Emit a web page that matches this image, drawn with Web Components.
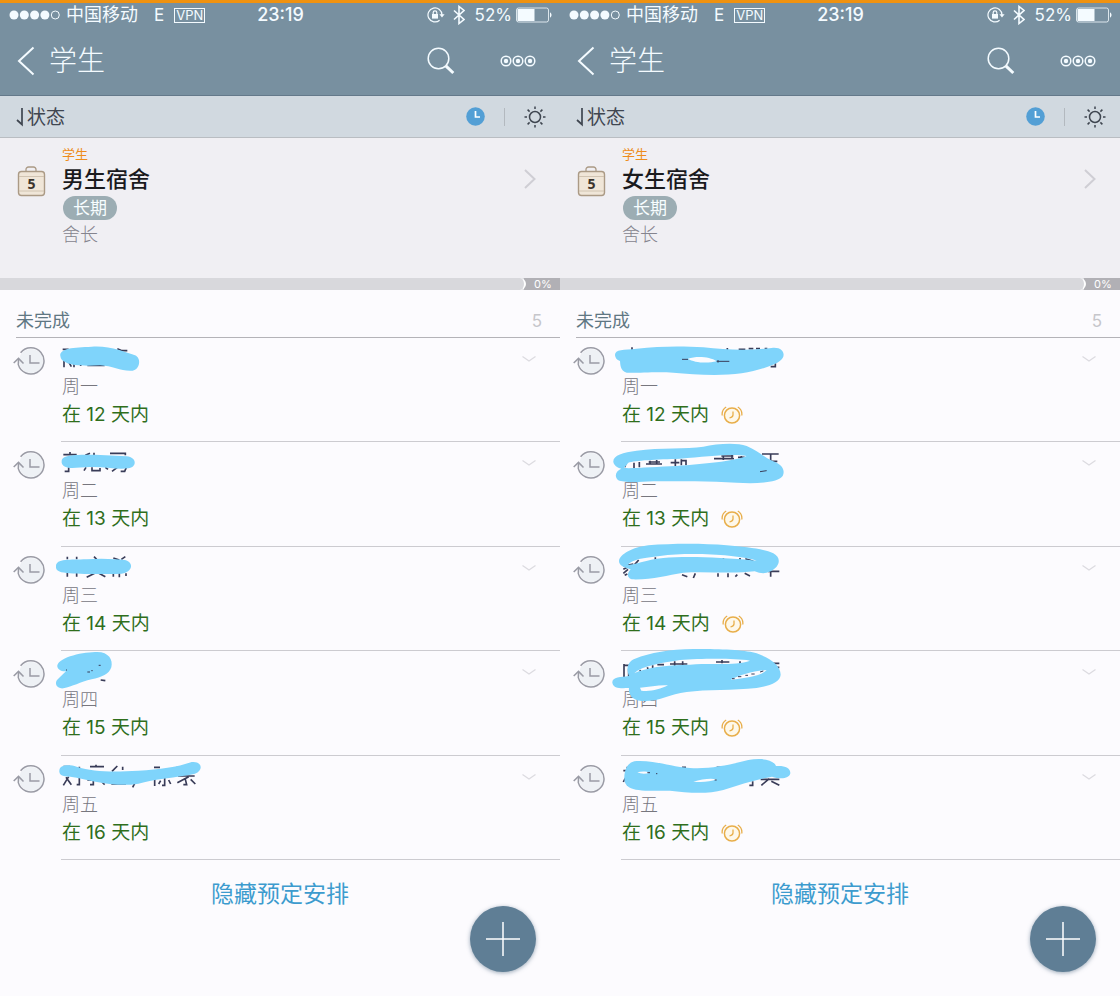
<!DOCTYPE html>
<html lang="zh-CN">
<head>
<meta charset="utf-8">
<meta name="viewport" content="width=device-width, initial-scale=1">
<title>学生</title>
<style>
  body {
    margin: 0;
    background: #fcfbfe;
    font-family: Inter, "Noto Sans CJK SC", sans-serif;
  }
</style>
</head>
<body>
<app-board>
  <phone-screen>
    <status-bar></status-bar>
    <nav-bar>学生</nav-bar>
    <filter-bar>状态</filter-bar>
    <project-card>
      <span slot="parent">学生</span>
      <span slot="title">男生宿舍</span>
      <span slot="tag">长期</span>
      <span slot="role">舍长</span>
    </project-card>
    <progress-strip>0%</progress-strip>
    <section-head>未完成<span slot="count">5</span></section-head>
    <task-list>
      <task-item cover="a1"><span slot="day">周一</span>在 12 天内</task-item>
      <task-item cover="a2"><span slot="day">周二</span>在 13 天内</task-item>
      <task-item cover="a3"><span slot="day">周三</span>在 14 天内</task-item>
      <task-item cover="a4"><span slot="day">周四</span>在 15 天内</task-item>
      <task-item cover="a5"><span slot="day">周五</span>在 16 天内</task-item>
    </task-list>
    <screen-footer>隐藏预定安排</screen-footer>
  </phone-screen>
  <phone-screen>
    <status-bar></status-bar>
    <nav-bar>学生</nav-bar>
    <filter-bar>状态</filter-bar>
    <project-card>
      <span slot="parent">学生</span>
      <span slot="title">女生宿舍</span>
      <span slot="tag">长期</span>
      <span slot="role">舍长</span>
    </project-card>
    <progress-strip>0%</progress-strip>
    <section-head>未完成<span slot="count">5</span></section-head>
    <task-list>
      <task-item cover="b1" alarm><span slot="day">周一</span>在 12 天内</task-item>
      <task-item cover="b2" alarm><span slot="day">周二</span>在 13 天内</task-item>
      <task-item cover="b3" alarm><span slot="day">周三</span>在 14 天内</task-item>
      <task-item cover="b4" alarm><span slot="day">周四</span>在 15 天内</task-item>
      <task-item cover="b5" alarm><span slot="day">周五</span>在 16 天内</task-item>
    </task-list>
    <screen-footer>隐藏预定安排</screen-footer>
  </phone-screen>
</app-board>

<script>
const base = `
  * { box-sizing: border-box; }
  svg { display: block; flex: none; }
  button {
    display: block;
    margin: 0;
    padding: 0;
    border: 0;
    background: none;
    color: inherit;
    font: inherit;
    cursor: pointer;
  }
`;

// marker strokes over the names: top = row origin, units are a third of a pixel
const covers = {
  a1: { top: 24,
    marks: 'M188 58h18M352 56l14 6h16M192 90v22M204 92l10 18M222 92v20M242 98v10M262 106h52M326 96v12',
    ink: 'M181 78C178 55 220 52 275 50C330 46 375 66 405 76C425 84 420 119 398 122C365 125 340 108 300 106C260 108 215 108 197 97C188 93 182 88 181 78Z' },
  a2: { top: 336,
    marks: 'M190 374h40M210 366v10M256 376l14-6M282 368v8M330 370h46v6M206 412v12h-12M258 412l-6 10M276 412v10h24v-8M316 412l8 6M352 412l-16 12M380 410l-6 14h-12',
    ink: 'M185 392C187 374 225 374 285 374L380 379C412 382 411 413 385 415C345 419 310 409 270 411C235 412 210 417 195 410C186 405 184 399 185 392Z' },
  a3: { top: 651,
    marks: 'M202 680v8M230 680v8M282 680l8 8M340 684l18 6M376 680l-12 8M202 728v12M230 728v12M284 730l-24 12M294 728l22 12M340 730v10M358 728v14M378 730v8',
    ink: 'M168 709C168 685 210 690 260 688C310 684 350 688 375 690C403 698 398 726 365 731C310 733 240 733 200 729C175 727 167 721 168 709Z' },
  a4: { top: 183,
    marks: 'M302 270l14 2',
    ink: 'M172 230C169 205 240 187 285 186C325 183 340 208 334 232C328 252 305 262 275 268C240 276 218 290 190 295C168 297 162 277 174 267C182 259 191 251 198 244C187 244 175 241 172 230Z',
    dots: 'M262 246h8M296 226h6M274 242h4M198 240h3' },
  a5: { top: 498,
    marks: 'M190 530h20M238 530v20M270 530h42M288 524v8M352 528l-16 16M368 530v10M462 532h18M530 532h50M206 560l-16 26M198 562l16 22M238 560v24h-8M262 570l38-2M280 566v18h-10M306 576l8 8M334 582h44M404 580l-6 12M464 560v28M494 560v26h-8M482 572l-6 10M506 570l6 12M534 558h50M566 560l-34 18M556 568l4 16h-10M572 568l14 14',
    ink: 'M178 546C176 522 208 524 230 530C280 546 340 546 415 542C480 538 530 532 575 516C606 512 612 542 585 551C530 563 460 567 415 581C350 592 290 575 230 563C204 558 180 562 178 546Z' },
  b1: { top: 24,
    marks: 'M216 52v8M502 54v6M536 58h20M566 56h14M588 56h12M614 56h8M632 110h14v-10',
    ink: 'M165 76C164 57 190 60 230 56C300 48 370 48 430 52C500 60 570 62 635 54C668 50 676 72 668 84C656 104 600 120 545 130C480 139 400 134 340 128C290 124 225 130 200 128C180 122 181 102 180 93C170 90 166 84 165 76ZM384 86C410 78 450 80 470 94C440 101 402 98 384 86Z',
    dots: 'M366 88h18M470 94h38M474 90v8' },
  b2: { top: 336,
    marks: 'M190 372v10M606 372h50M632 372v24M614 394h38M194 412l4-12M222 398v16M238 396v16M270 392v12M258 402h48M266 396h34M290 390v14M346 388v20M332 398h26M364 388v18M364 392h14v14M490 376v14M516 374v14M462 386h60M484 378h36M544 378v8M534 382h20',
    ink: 'M160 396C158 376 188 368 230 362C300 352 380 358 430 350C470 341 530 337 560 348C595 362 610 382 640 394C668 404 676 422 668 438C655 458 590 462 530 458C450 454 360 454 280 454C230 457 190 458 175 451C161 440 168 422 184 416C171 413 162 406 160 396ZM192 414C220 416 290 410 350 408C430 402 520 394 560 378C520 370 440 380 360 386C290 388 225 391 205 398Z',
    dots: 'M600 425l20-3' },
  b3: { top: 651,
    marks: 'M190 708l30-6M236 690l-12 14M286 682v10M190 718l24-12M190 730l14-12M194 736l8-4M366 734l16 6M406 730l-6 14M474 684v8M490 684v8M540 684v8M556 686l24 8M474 730v10M504 730v12M532 734l-6 6M554 730l16 8M624 724h34M632 724v16',
    ink: 'M177 693C180 672 218 652 265 646C340 640 430 640 500 646C560 651 612 657 640 670C662 682 660 702 645 715C630 730 608 734 584 724C520 732 440 724 370 728C320 736 275 750 215 748C196 740 205 726 212 718C190 712 177 706 177 693ZM204 705C230 703 255 690 310 684C370 678 470 680 590 692C530 674 390 666 300 678C250 684 215 688 204 705Z' },
  b4: { top: 183,
    marks: 'M192 222v42M192 226h20M206 236v24M220 244v14M240 240l4 12M262 232l4 12M278 226v18M292 224h20M330 222h52M344 214v16M368 214v16M468 216h40M486 210v10M540 214v8M630 220h28M636 232h22',
    ink: 'M157 278C156 260 182 262 207 258C198 238 202 214 225 206C270 188 330 178 400 177C480 176 560 180 590 190C630 204 662 226 662 254C660 276 634 286 590 294C520 302 440 298 380 306C325 312 300 336 245 333C212 328 205 310 207 294C180 295 160 296 157 278ZM222 250C260 232 310 226 390 224C460 218 530 228 570 212C520 204 420 206 360 210C300 220 250 226 222 250ZM240 293C270 290 300 284 324 286C300 298 270 306 244 302ZM512 269C540 254 580 242 620 240C606 256 560 264 512 269Z',
    dots: 'M516 266h8M534 260h10M556 256h8M574 252h10M600 246l10-3' },
  b5: { top: 498,
    marks: 'M202 530v20M190 542h16M204 560v28M196 564l-6 12M366 532h12M470 532h36M578 574v12h-10M602 568h56M628 566l-24 20M634 574l24 12',
    ink: 'M193 560C194 542 200 515 230 513C290 511 330 530 390 534C450 538 510 524 565 510C602 503 640 508 648 528C675 526 692 534 691 550C688 567 660 568 636 560C590 568 540 584 490 600C440 614 380 608 330 602C280 602 230 606 207 592C195 584 192 574 193 560ZM400 575C425 568 450 564 470 568C450 576 425 578 400 575ZM232 547C245 543 260 544 270 548C258 552 242 552 232 547Z',
    dots: 'M262 548h8M288 551h4M464 570h6' }
};

class AppBoard extends HTMLElement {
  constructor() {
    super();
    this.attachShadow({ mode: 'open' }).innerHTML = `
      <style>
        ${base}
        :host {
          display: grid;
          grid-template-columns: 1fr 1fr;
          min-height: 100vh;
          box-sizing: border-box;
          border-top: 3px solid #f0920f;
        }
      </style>
      <slot></slot>
    `;
  }
}

class PhoneScreen extends HTMLElement {
  constructor() {
    super();
    this.attachShadow({ mode: 'open' }).innerHTML = `
      <style>
        :host {
          display: flex;
          flex-direction: column;
          min-width: 0;
          background: #fcfbfe;
        }
      </style>
      <slot></slot>
    `;
  }
}

class StatusBar extends HTMLElement {
  constructor() {
    super();
    this.attachShadow({ mode: 'open' }).innerHTML = `
      <style>
        ${base}
        :host {
          display: grid;
          grid-template-columns: 1fr auto 1fr;
          align-items: center;
          height: 24px;
          padding: 0 8px 0 9px;
          background: #7890a0;
          color: #f4fbff;
          font-size: 17px;
          line-height: 24px;
          white-space: nowrap;
        }
        .left, .right { display: flex; align-items: center; }
        .right { justify-content: flex-end; }
        .carrier { margin-left: 6px; font-size: 18px; }
        .net { margin-left: 16px; }
        .vpn {
          margin-left: 10px;
          padding: 0 1px;
          border: 1px solid;
          font-size: 13px;
          line-height: 13px;
        }
        .time { font-size: 18px; font-weight: 500; }
        .bt { margin: 0 10px 0 8px; }
        .battery { margin-left: 4px; }
      </style>
      <div class="left">
        <svg width="51" height="10" viewBox="0 0 51 10" fill="currentColor">
          <circle cx="5" cy="5" r="4.5"/><circle cx="15.3" cy="5" r="4.5"/>
          <circle cx="25.6" cy="5" r="4.5"/><circle cx="35.9" cy="5" r="4.5"/>
          <circle cx="46.3" cy="5" r="4" fill="none" stroke="currentColor"/>
        </svg>
        <span class="carrier">中国移动</span>
        <span class="net">E</span>
        <span class="vpn">VPN</span>
      </div>
      <span class="time">23:19</span>
      <div class="right">
        <svg width="18" height="16" viewBox="0 0 18 16" fill="none" stroke="currentColor" stroke-width="1.2">
          <path d="M12.6 13.2A7 7 0 1 1 15 8"/>
          <path d="M12.4 7.2h5.2L15 10.4z" fill="currentColor" stroke="none"/>
          <rect x="5" y="7" width="6" height="4.6" fill="currentColor" stroke="none"/>
          <path d="M6.2 7V5.6a1.8 1.8 0 0 1 3.6 0V7"/>
        </svg>
        <svg class="bt" width="12" height="20" viewBox="0 0 12 20" fill="none" stroke="currentColor" stroke-width="1.6">
          <path d="M1 5.5l10 9L6 18.5v-17l5 4-10 9"/>
        </svg>
        <span>52%</span>
        <svg class="battery" width="36" height="16" viewBox="0 0 36 16">
          <rect x=".5" y="1" width="32" height="14" rx="2" fill="none" stroke="currentColor" stroke-opacity=".8"/>
          <rect x="1.500" y="2" width="17" height="12" fill="currentColor"/>
          <path d="M34 5.5c2 .6 2 4.400 0 5z" fill="currentColor"/>
        </svg>
      </div>
    `;
  }
}

class NavBar extends HTMLElement {
  constructor() {
    super();
    this.attachShadow({ mode: 'open' }).innerHTML = `
      <style>
        ${base}
        :host {
          display: flex;
          align-items: center;
          height: 69px;
          padding: 0 24px 0 17px;
          background: #7890a0;
          border-bottom: 1px solid #64798a;
          box-sizing: border-box;
          color: #f4fbff;
        }
        h1 {
          flex: 1;
          margin: 0 0 0 14px;
          font-size: 28px;
          font-weight: 300;
          line-height: 40px;
        }
        .search { margin-right: 45px; }
      </style>
      <button aria-label="返回">
        <svg width="18" height="30" viewBox="0 0 18 30" fill="none" stroke="currentColor" stroke-width="2">
          <path d="M16.500 1.500L2 15l14.500 13.500"/>
        </svg>
      </button>
      <h1><slot></slot></h1>
      <button class="search" aria-label="搜索">
        <svg width="28" height="28" viewBox="0 0 28 28" fill="none" stroke="currentColor">
          <circle cx="11.500" cy="11.500" r="10.300" stroke-width="1.500"/>
          <path d="M18.800 18.800l7.500 7.200" stroke-width="3"/>
        </svg>
      </button>
      <button aria-label="更多">
        <svg width="36" height="12" viewBox="0 0 36 12" fill="none" stroke="currentColor" stroke-width="1.500">
          <circle cx="6" cy="6" r="4.800"/><circle cx="18" cy="6" r="4.800"/><circle cx="30" cy="6" r="4.800"/>
          <g fill="currentColor" stroke="none">
            <circle cx="6" cy="6" r="2.200"/><circle cx="18" cy="6" r="2.200"/><circle cx="30" cy="6" r="2.200"/>
          </g>
        </svg>
      </button>
    `;
  }
}

class FilterBar extends HTMLElement {
  constructor() {
    super();
    this.attachShadow({ mode: 'open' }).innerHTML = `
      <style>
        ${base}
        :host {
          display: flex;
          align-items: center;
          gap: 19px;
          height: 42px;
          padding: 0 14px 0 16px;
          box-sizing: border-box;
          background: #d1d9e0;
          border-bottom: 1px solid #b9bdc2;
          color: #3f4650;
        }
        .sort {
          display: flex;
          align-items: center;
          gap: 3px;
          margin-right: auto;
          font-size: 19px;
          line-height: 30px;
        }
        .sort span { padding-top: 2px; }
        .line { width: 1px; height: 18px; background: #b3b9bf; }
      </style>
      <button class="sort">
        <svg width="8" height="20" viewBox="0 0 8 20" fill="none" stroke="currentColor" stroke-width="1.700">
          <path d="M6 1v16.500L1 13"/>
        </svg>
        <span><slot></slot></span>
      </button>
      <button aria-label="时间">
        <svg width="19" height="19" viewBox="0 0 19 19">
          <circle cx="9.500" cy="9.500" r="9.300" fill="#539fd5"/>
          <path d="M9.500 4v6h4.500" fill="none" stroke="#fff" stroke-width="1.700"/>
        </svg>
      </button>
      <span class="line"></span>
      <button aria-label="亮度">
        <svg width="22" height="22" viewBox="0 0 22 22" fill="none" stroke="currentColor" stroke-width="1.500">
          <circle cx="11" cy="11" r="5.500"/>
          <path d="M11 .5v2.500M11 19v2.500M.5 11h2.500M19 11h2.500M3.600 3.600l2 2M16.400 16.400l2 2M3.600 18.400l2-2M16.400 5.600l2-2"/>
        </svg>
      </button>
    `;
  }
}

class ProjectCard extends HTMLElement {
  constructor() {
    super();
    this.attachShadow({ mode: 'open' }).innerHTML = `
      <style>
        ${base}
        :host {
          display: flex;
          padding: 8px 24px 28px 17px;
          background: #f0eff3;
        }
        .case { margin: 20px 16px 0 0; }
        .text { flex: 1; display: flex; flex-direction: column; align-items: flex-start; }
        .parent { color: #ee8d1c; font-size: 13px; line-height: 16px; }
        h2 { margin: 0; color: #1a1a1d; font-size: 22px; line-height: 34px; font-weight: 500; }
        .tag {
          margin-left: 1px;
          padding: 0 10px;
          border-radius: 12px;
          background: #9cadb3;
          color: #f7fdff;
          font-size: 17px;
          line-height: 24px;
        }
        .role { color: #85848e; font-size: 18px; line-height: 30px; font-weight: 300; }
        .go { align-self: flex-start; margin-top: 23px; color: #cfced4; }
      </style>
      <svg class="case" width="29" height="31" viewBox="0 0 29 31" fill="none" stroke="#ab9a85">
        <path d="M9 5.500V3.500a2.500 2.500 0 0 1 2.500-2.500h5a2.500 2.500 0 0 1 2.500 2.500V5.500" stroke-width="1.300"/>
        <rect x="1.500" y="5.500" width="26" height="24" rx="3" fill="#f0e6d8" stroke-width="1.400"/>
        <path d="M2 10.500h25M2 25h25" stroke="#c9bba8" stroke-width=".8"/>
        <text x="14.500" y="23" fill="#3c342c" stroke="none" text-anchor="middle" font-family="Open Sans, sans-serif" font-size="14" font-weight="700">5</text>
      </svg>
      <div class="text">
        <span class="parent"><slot name="parent"></slot></span>
        <h2><slot name="title"></slot></h2>
        <span class="tag"><slot name="tag"></slot></span>
        <span class="role"><slot name="role"></slot></span>
      </div>
      <button class="go" aria-label="打开">
        <svg width="12" height="20" viewBox="0 0 12 20" fill="none" stroke="currentColor" stroke-width="2">
          <path d="M1 1l9.500 9L1 19"/>
        </svg>
      </button>
    `;
  }
}

class ProgressStrip extends HTMLElement {
  constructor() {
    super();
    this.attachShadow({ mode: 'open' }).innerHTML = `
      <style>
        ${base}
        :host { display: block; }
        .bar { display: flex; height: 12px; background: linear-gradient(to left, #b1b0b5 36px, #d8d8dc 36px); }
        .track { flex: 1; border-right: 2px solid #fff; border-radius: 0 6px 6px 0; background: #d8d8dc; }
        .value { width: 34px; padding-left: 8px; color: #fff; font-size: 11px; line-height: 12px; }
      </style>
      <div class="bar">
        <div class="track"></div>
        <div class="value"><slot></slot></div>
      </div>
    `;
  }
}

class SectionHead extends HTMLElement {
  constructor() {
    super();
    this.attachShadow({ mode: 'open' }).innerHTML = `
      <style>
        ${base}
        :host {
          display: flex;
          justify-content: space-between;
          margin-left: 16px;
          padding: 16px 18px 1px 0;
          border-bottom: 1px solid #b4b3b8;
          font-size: 18px;
          line-height: 30px;
        }
        h3 { margin: 0; color: #607783; font: inherit; }
        .count { color: #c6c6cb; font-size: 17px; }
      </style>
      <h3><slot></slot></h3>
      <span class="count"><slot name="count"></slot></span>
    `;
  }
}

class TaskList extends HTMLElement {
  constructor() {
    super();
    this.attachShadow({ mode: 'open' }).innerHTML = `
      <style>
        :host { display: flex; flex: 1; flex-direction: column; }
      </style>
      <slot></slot>
    `;
  }
}

class TaskItem extends HTMLElement {
  constructor() {
    super();
    this.attachShadow({ mode: 'open' });
  }

  connectedCallback() {
    const cover = covers[this.getAttribute('cover')];
    const alarm = this.hasAttribute('alarm') ? `
      <svg class="alarm" width="22" height="20" viewBox="0 0 22 20" fill="none" stroke="#e8ae4a" stroke-width="1.500">
        <circle cx="11" cy="10.500" r="7.600" fill="#fef8ea"/>
        <path d="M12 6.500v3.500q0 2-3.500 3M1.200 10.500C.8 6.500 2.500 3.500 5.200 2M20.800 10.500C21.200 6.500 19.500 3.500 16.800 2" stroke-width="1.300"/>
      </svg>` : '';

    this.shadowRoot.innerHTML = `
      <style>
        ${base}
        :host { display: flex; flex: 1; min-height: 104px; padding-left: 13px; }
        .repeat { margin: 9px 16px 0 0; }
        .body {
          position: relative;
          display: flex;
          flex: 1;
          border-bottom: 1px solid #cccbd0;
        }
        .text { flex: 1; padding: 35px 0 0 1px; }
        .day { color: #77767e; font-size: 18px; line-height: 28px; font-weight: 300; }
        .due {
          display: flex;
          align-items: center;
          gap: 12px;
          color: #2f6e1c;
          font-size: 19px;
          line-height: 28px;
        }
        .cover { position: absolute; left: -11px; top: -10px; pointer-events: none; }
        .open { align-self: flex-start; margin: 17px 24px 0 0; color: #dcdbe0; }
      </style>
      <svg class="repeat" width="32" height="28" viewBox="0 0 32 28" fill="none" stroke="#9a9ba5" stroke-width="1.500">
        <circle cx="18" cy="14" r="12" fill="#eef1f5" stroke="none"/>
        <path d="M7.600 5.800A13.100 13.100 0 1 1 5.300 17.600L5.500 12"/>
        <path d="M.7 16L5.500 11.400L10.500 16.600M17 8v8h9.500"/>
      </svg>
      <div class="body">
        <div class="text">
          <div class="day"><slot name="day"></slot></div>
          <div class="due"><span><slot></slot></span>${alarm}</div>
        </div>
        <button class="open" aria-label="展开">
          <svg width="14" height="8" viewBox="0 0 14 8" fill="none" stroke="currentColor" stroke-width="1.300">
            <path d="M.5 1.500L7 6l6.500-4.500"/>
          </svg>
        </button>
        <svg class="cover" aria-hidden="true" width="184" height="66" viewBox="150 ${cover.top - 30} 552 198" fill="none" stroke="#393c58" stroke-width="5">
          <path d="${cover.marks}"/>
          <path d="${cover.ink}" fill="#7fd4fb" fill-rule="evenodd" stroke="none"/>
          <path d="${cover.dots || ''}" stroke-width="3"/>
        </svg>
      </div>
    `;
  }
}

class ScreenFooter extends HTMLElement {
  constructor() {
    super();
    this.attachShadow({ mode: 'open' }).innerHTML = `
      <style>
        ${base}
        :host {
          position: relative;
          display: flex;
          justify-content: center;
          align-items: flex-start;
          min-height: 136px;
          padding-top: 17px;
          box-sizing: border-box;
        }
        .toggle { color: #3d9bce; font-size: 23px; line-height: 34px; }
        .add {
          position: absolute;
          right: 24px;
          bottom: 24px;
          display: grid;
          place-items: center;
          width: 66px;
          height: 66px;
          border-radius: 50%;
          background: #5f7e95;
          box-shadow: 0 1px 4px rgba(60, 90, 115, .5);
          color: #fff;
        }
      </style>
      <button class="toggle"><slot></slot></button>
      <button class="add" aria-label="添加">
        <svg width="34" height="34" viewBox="0 0 34 34" stroke="currentColor" stroke-width="1.500">
          <path d="M17 0v34M0 17h34"/>
        </svg>
      </button>
    `;
  }
}

customElements.define('app-board', AppBoard);
customElements.define('phone-screen', PhoneScreen);
customElements.define('status-bar', StatusBar);
customElements.define('nav-bar', NavBar);
customElements.define('filter-bar', FilterBar);
customElements.define('project-card', ProjectCard);
customElements.define('progress-strip', ProgressStrip);
customElements.define('section-head', SectionHead);
customElements.define('task-list', TaskList);
customElements.define('task-item', TaskItem);
customElements.define('screen-footer', ScreenFooter);
</script>
</body>
</html>
